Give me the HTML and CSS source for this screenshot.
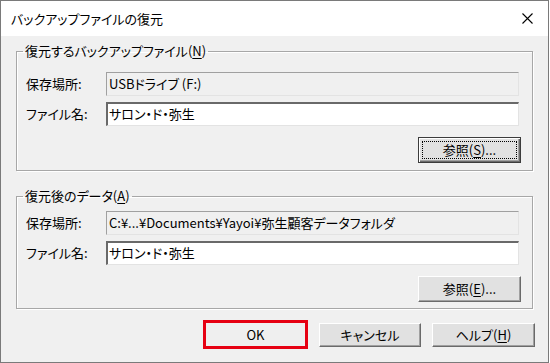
FILE: index.html
```html
<!DOCTYPE html>
<html lang="ja">
<head>
<meta charset="utf-8">
<link rel="stylesheet" href="styles.css">
</head>
<body>
<div class="dialog">
  <div class="titlebar">
    <span class="title">バックアップファイルの復元</span>
    <svg class="close" width="11" height="11" viewBox="0 0 11 11"><path d="M0.5 0.5 L10.5 10.5 M10.5 0.5 L0.5 10.5" stroke="#000" stroke-width="1.1" fill="none"/></svg>
  </div>
  <div class="content">
    <fieldset class="group g1">
      <legend>復元するバックアップファイル(<u>N</u>)</legend>
      <div class="row">
        <span class="label">保存場所:</span>
        <div class="field readonly">USBドライブ (F:)</div>
      </div>
      <div class="row">
        <span class="label">ファイル名:</span>
        <div class="field edit">サロン・ド・弥生</div>
      </div>
      <div class="actions">
        <button class="btn browse default"><span class="focus">参照(<u>S</u>)...</span></button>
      </div>
    </fieldset>
    <fieldset class="group g2">
      <legend>復元後のデータ(<u>A</u>)</legend>
      <div class="row">
        <span class="label">保存場所:</span>
        <div class="field readonly">C:¥...¥Documents¥Yayoi¥弥生顧客データフォルダ</div>
      </div>
      <div class="row">
        <span class="label">ファイル名:</span>
        <div class="field edit">サロン・ド・弥生</div>
      </div>
      <div class="actions">
        <button class="btn browse">参照(<u>E</u>)...</button>
      </div>
    </fieldset>
    <div class="buttons">
      <button class="btn ok">OK</button>
      <button class="btn cancel">キャンセル</button>
      <button class="btn help">ヘルプ(<u>H</u>)</button>
    </div>
  </div>
</div>
</body>
</html>
```

FILE: styles.css
```css
* { box-sizing: border-box; }
html, body { margin: 0; padding: 0; background: #fff; }
body {
  font-family: "Noto Sans CJK JP", "Noto Sans", sans-serif;
  font-feature-settings: "palt";
  font-size: 13px;
  color: #000;
}
.dialog {
  width: 549px;
  height: 363px;
  border: 1px solid #7a7a7a;
  display: flex;
  flex-direction: column;
  background: #f0f0f0;
}
.titlebar {
  height: 35px;
  background: #fff;
  display: flex;
  align-items: center;
  justify-content: space-between;
  padding: 0 15px 0 10px;
}
.title { font-size: 13px; line-height: 16px; }
.close { display: block; }
.content {
  flex: 1;
  padding: 7px 0 0 15px;
  display: flex;
  flex-direction: column;
}
.group {
  width: 517px;
  margin: 0;
  padding: 13px 13px 7px 9px;
  border: 1px solid #a7a7a7;
  box-shadow: inset 1px 1px 0 #fff, 1px 1px 0 #fff;
  min-width: 0;
}
.group legend {
  margin-left: -3px;
  padding: 0 2px;
  line-height: 16px;
  font-size: 13px;
}
.g2 { margin-top: 17px; padding-top: 7px; padding-bottom: 6px; }
.row {
  display: flex;
  align-items: center;
}
.row + .row { margin-top: 6px; }
.label { width: 80px; flex: none; line-height: 16px; }
.field {
  flex: 1;
  height: 24px;
  line-height: 20px;
  white-space: nowrap;
  overflow: hidden;
}
.field.readonly {
  background: #f0f0f0;
  border: 1px solid #e3e3e3;
  border-top-color: #a0a0a0;
  border-left-color: #a0a0a0;
  padding: 1px 2px;
}
.field.edit {
  background: #fff;
  border: 1px solid #e3e3e3;
  border-top: 2px solid #696969;
  border-left: 2px solid #696969;
  padding: 0 1px;
}
.actions {
  display: flex;
  justify-content: flex-end;
  margin-top: 11px;
  margin-right: -2px;
}
.btn {
  font-family: inherit;
  font-feature-settings: "palt";
  font-size: 13px;
  color: #000;
  background: #e1e1e1;
  border: 1px solid;
  border-color: #fff #6a6a6a #6a6a6a #fff;
  box-shadow: inset -1px -1px 0 #a0a0a0;
  padding: 0;
  margin: 0;
  line-height: 16px;
  display: flex;
  align-items: center;
  justify-content: center;
}
.browse { width: 103px; height: 26px; }
.browse.default {
  border: 1px solid #3c3c3c;
  box-shadow: inset 1px 1px 0 #fff, inset -1px -1px 0 #6a6a6a, inset -2px -2px 0 #a0a0a0;
  padding: 3px;
}
.focus {
  flex: 1;
  align-self: stretch;
  border: 1px dotted #000;
  display: flex;
  align-items: center;
  justify-content: center;
}
.buttons {
  width: 519px;
  margin-top: 11px;
  display: flex;
  justify-content: flex-end;
  align-items: center;
  gap: 11px;
}
.ok {
  width: 105px;
  height: 29px;
  border: 3px solid #e60012;
  box-shadow: none;
  background: #efefef;
}
.cancel { width: 102px; height: 24px; }
.help { width: 103px; height: 24px; }
u { text-decoration: underline; text-underline-offset: 2px; }
```
